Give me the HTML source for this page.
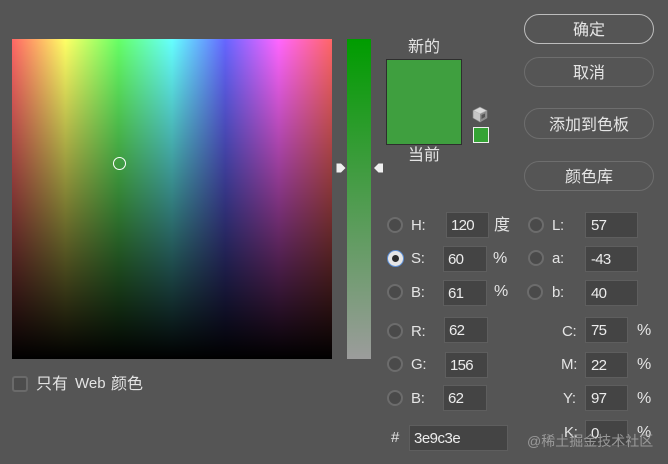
<!DOCTYPE html>
<html lang="zh">
<head>
<meta charset="utf-8">
<style>
html,body{margin:0;padding:0;background:#545454}
#r{position:relative;width:668px;height:464px;overflow:hidden;background:#555;color:#e4e4e4;font-family:"Liberation Sans","Noto Sans CJK SC",sans-serif;font-size:15px;letter-spacing:-.3px;line-height:18px;filter:blur(.3px)}
#r div{position:absolute;box-sizing:border-box}
.t{white-space:nowrap}
.l{margin-top:1px}
.c{font-size:16px;letter-spacing:0}
.p{font-size:16px;letter-spacing:0}
.b{left:524px;width:130px;border:1.5px solid #6e6e6e;border-radius:16px;text-align:center;color:#e6e6e6;font-size:16px;letter-spacing:0}
.f{background:#444;border:1px solid #5e5e5e;color:#ececec;font-size:15px;letter-spacing:-.7px;padding-left:4px;padding-top:1px}
.w{padding-left:5px}
.o{width:16px;height:16px;border-radius:50%;background:#4a4a4a;border:2px solid #6c6c6c}
</style>
</head>
<body>
<div id="r">
<div style="left:12px;top:39px;width:320px;height:320px;background:linear-gradient(to bottom,rgba(0,0,0,0),#000),linear-gradient(to right,#ff6666,#ffff66,#66ff66,#66ffff,#6666ff,#ff66ff,#ff6666)"></div>
<div style="left:113px;top:157px;width:13px;height:13px;border:1px solid #fff;border-radius:50%"></div>
<div style="left:347px;top:39px;width:24px;height:320px;background:linear-gradient(to bottom,#009c00,#9c9c9c)"></div>
<svg style="position:absolute;left:335px;top:162px" width="50" height="12"><path d="M1.500 1.500H6L10.500 6L6 10.500H1.500Z" fill="#f0f0f0"/><path d="M48 1.500H43.500L39 6L43.500 10.500H48Z" fill="#f0f0f0"/></svg>

<div class="t c" style="left:408px;top:39px">新的</div>
<div style="left:386px;top:59px;width:76px;height:86px;background:#3f9f3f;border:1px solid #2e2e2e"></div>
<div class="t c" style="left:408px;top:147px">当前</div>
<svg style="position:absolute;left:472px;top:106px" width="16" height="17" viewBox="0 0 16 17"><path d="M8 1L15 4.500V12L8 16L1 12V4.500Z" fill="#b4b4b4" stroke="#8a8a8a" stroke-width=".6"/><path d="M8 1.500L14 4.500L8 7.500L2 4.500Z" fill="#dadada"/><path d="M8 8V15.500L14.500 12V5Z" fill="#8c8c8c"/><path d="M9.500 9L13 7.500V11L9.500 13Z" fill="#555"/><path d="M8 8V15.500L1.500 12V5Z" fill="#c6c6c6"/></svg>
<div style="left:473px;top:127px;width:16px;height:16px;background:#35a335;border:1px solid #f0f0f0"></div>

<div class="b" style="top:14px;height:30px;border-color:#bdbdbd;line-height:31px">确定</div>
<div class="b" style="top:57px;height:30px;line-height:31px">取消</div>
<div class="b" style="top:108px;height:31px;line-height:33px">添加到色板</div>
<div class="b" style="top:161px;height:30px;line-height:32px">颜色库</div>

<div class="o" style="left:387px;top:217px"></div>
<div class="t l" style="left:411px;top:216px">H:</div>
<div class="f" style="left:446px;top:212px;width:43px;height:26px;line-height:24px">120</div>
<div class="t c" style="left:494px;top:217px">度</div>
<div class="o" style="left:528px;top:217px"></div>
<div class="t l" style="left:552px;top:216px">L:</div>
<div class="f w" style="left:585px;top:212px;width:53px;height:26px;line-height:24px">57</div>

<div style="left:387px;top:250px;width:17px;height:17px;border-radius:50%;background:#e6e6e6;border:1.500px solid #5d8fd6"></div>
<div style="left:392px;top:255px;width:7px;height:7px;border-radius:50%;background:#2c2c2c"></div>
<div class="t l" style="left:411px;top:249px">S:</div>
<div class="f" style="left:443px;top:246px;width:44px;height:26px;line-height:24px">60</div>
<div class="t p" style="left:493px;top:250px">%</div>
<div class="o" style="left:528px;top:250px"></div>
<div class="t l" style="left:552px;top:249px">a:</div>
<div class="f w" style="left:585px;top:246px;width:53px;height:26px;line-height:24px">-43</div>

<div class="o" style="left:387px;top:284px"></div>
<div class="t l" style="left:411px;top:283px">B:</div>
<div class="f" style="left:443px;top:280px;width:44px;height:26px;line-height:24px">61</div>
<div class="t p" style="left:494px;top:283px">%</div>
<div class="o" style="left:527px;top:284px"></div>
<div class="t l" style="left:552px;top:283px">b:</div>
<div class="f w" style="left:585px;top:280px;width:53px;height:26px;line-height:24px">40</div>

<div class="o" style="left:387px;top:323px"></div>
<div class="t l" style="left:411px;top:322px">R:</div>
<div class="f" style="left:444px;top:317px;width:44px;height:26px;line-height:24px">62</div>
<div class="t l" style="left:562px;top:322px">C:</div>
<div class="f w" style="left:585px;top:317px;width:43px;height:26px;line-height:24px">75</div>
<div class="t p" style="left:637px;top:322px">%</div>

<div class="o" style="left:387px;top:356px"></div>
<div class="t l" style="left:411px;top:355px">G:</div>
<div class="f" style="left:445px;top:352px;width:43px;height:26px;line-height:24px">156</div>
<div class="t l" style="left:561px;top:355px">M:</div>
<div class="f w" style="left:585px;top:352px;width:43px;height:26px;line-height:24px">22</div>
<div class="t p" style="left:637px;top:356px">%</div>

<div class="o" style="left:387px;top:390px"></div>
<div class="t l" style="left:411px;top:389px">B:</div>
<div class="f" style="left:443px;top:385px;width:44px;height:26px;line-height:24px">62</div>
<div class="t l" style="left:563px;top:389px">Y:</div>
<div class="f w" style="left:585px;top:385px;width:43px;height:26px;line-height:24px">97</div>
<div class="t p" style="left:637px;top:390px">%</div>

<div class="t l" style="left:391px;top:428px">#</div>
<div class="f" style="left:409px;top:425px;width:99px;height:26px;line-height:24px;letter-spacing:-.5px">3e9c3e</div>
<div class="t l" style="left:564px;top:423px">K:</div>
<div class="f w" style="left:585px;top:420px;width:43px;height:26px;line-height:24px">0</div>
<div class="t p" style="left:637px;top:424px">%</div>
<div class="t" style="left:527px;top:432px;color:#a6a6a6;font-size:14px;letter-spacing:0;opacity:.85">@稀土掘金技术社区</div>

<div style="left:12px;top:376px;width:16px;height:16px;background:#4c4c4c;border:2px solid #6a6a6a;border-radius:3px"></div>
<div class="t c" style="left:36px;top:376px">只有</div>
<div class="t" style="left:75px;top:375px;letter-spacing:0">Web</div>
<div class="t c" style="left:111px;top:376px">颜色</div>
</div>
</body>
</html>
